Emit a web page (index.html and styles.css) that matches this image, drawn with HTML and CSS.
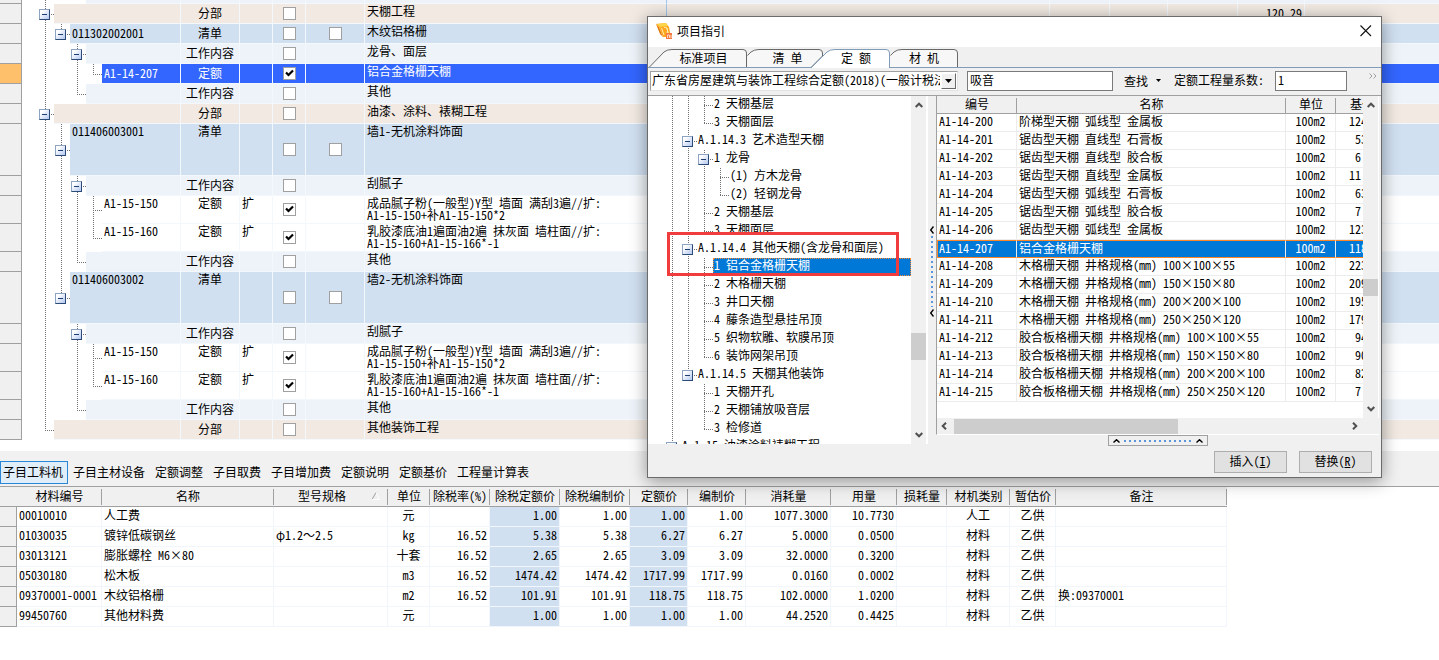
FILE: index.html
```html
<!DOCTYPE html>
<html lang="zh-CN">
<head>
<meta charset="utf-8">
<title>项目指引</title>
<link rel="stylesheet" href="styles.css">
</head>
<body>
<main class="app">
<table class="budget">
<colgroup><col class="w-head"><col class="w-tree"><col class="w-type"><col class="w-flag"><col class="w-flag"><col class="w-check"><col class="w-name"><col class="w-wide"><col class="w-a"><col class="w-b"><col class="w-c"><col class="w-d"><col></colgroup>
<tbody>
<tr class="work stub"><th></th><td><div class="branch"><i class="g v"></i><i class="g"></i><i class="g"></i><span class="code"></span></div></td><td></td><td></td><td></td><td></td><td class="name"></td><td></td><td></td><td></td><td></td><td></td><td></td></tr>
<tr class="part"><th></th><td><div class="branch"><i class="g v t"><button class="tog" aria-label="折叠"></button></i><span class="code"></span></div></td><td class="type">分部</td><td></td><td class="check"><input type="checkbox" aria-label="分部"></td><td></td><td class="name">天棚工程</td><td></td><td></td><td></td><td></td><td class="num">120.29</td><td></td></tr>
<tr class="list"><th></th><td><div class="branch"><i class="g v"></i><i class="g e"><button class="tog" aria-label="折叠"></button></i><span class="code">011302002001</span></div></td><td class="type">清单</td><td></td><td class="check"><input type="checkbox" aria-label="清单"></td><td class="check"><input type="checkbox" aria-label="清单选项"></td><td class="name">木纹铝格栅</td><td></td><td></td><td></td><td></td><td></td><td></td></tr>
<tr class="work"><th></th><td><div class="branch"><i class="g v"></i><i class="g"></i><i class="g v t"><button class="tog" aria-label="折叠"></button></i><span class="code"></span></div></td><td class="type">工作内容</td><td></td><td class="check"><input type="checkbox" aria-label="工作内容"></td><td></td><td class="name">龙骨、面层</td><td></td><td></td><td></td><td></td><td></td><td></td></tr>
<tr class="current"><th></th><td><div class="branch"><i class="g v"></i><i class="g"></i><i class="g v"></i><i class="g e"></i><span class="code">A1-14-207</span></div></td><td class="type">定额</td><td></td><td class="check"><input type="checkbox" checked aria-label="定额"></td><td></td><td class="name">铝合金格栅天棚</td><td></td><td></td><td></td><td></td><td></td><td></td></tr>
<tr class="work"><th></th><td><div class="branch"><i class="g v"></i><i class="g"></i><i class="g e"></i><span class="code"></span></div></td><td class="type">工作内容</td><td></td><td class="check"><input type="checkbox" aria-label="工作内容"></td><td></td><td class="name">其他</td><td></td><td></td><td></td><td></td><td></td><td></td></tr>
<tr class="part"><th></th><td><div class="branch"><i class="g v t"><button class="tog" aria-label="折叠"></button></i><span class="code"></span></div></td><td class="type">分部</td><td></td><td class="check"><input type="checkbox" aria-label="分部"></td><td></td><td class="name">油漆、涂料、裱糊工程</td><td></td><td></td><td></td><td></td><td></td><td></td></tr>
<tr class="list tall"><th></th><td><div class="branch"><i class="g v"></i><i class="g v t"><button class="tog" aria-label="折叠"></button></i><span class="code">011406003001</span></div></td><td class="type">清单</td><td></td><td class="check"><input type="checkbox" aria-label="清单"></td><td class="check"><input type="checkbox" aria-label="清单选项"></td><td class="name">墙1-无机涂料饰面</td><td></td><td></td><td></td><td></td><td></td><td></td></tr>
<tr class="work"><th></th><td><div class="branch"><i class="g v"></i><i class="g v"></i><i class="g v t"><button class="tog" aria-label="折叠"></button></i><span class="code"></span></div></td><td class="type">工作内容</td><td></td><td class="check"><input type="checkbox" aria-label="工作内容"></td><td></td><td class="name">刮腻子</td><td></td><td></td><td></td><td></td><td></td><td></td></tr>
<tr class="double"><th></th><td><div class="branch"><i class="g v"></i><i class="g v"></i><i class="g v"></i><i class="g v t"></i><span class="code">A1-15-150</span></div></td><td class="type">定额</td><td class="flag">扩</td><td class="check"><input type="checkbox" checked aria-label="定额"></td><td></td><td class="name">成品腻子粉(一般型)Y型 墙面 满刮3遍//扩:<br>A1-15-150+补A1-15-150*2</td><td></td><td></td><td></td><td></td><td></td><td></td></tr>
<tr class="double"><th></th><td><div class="branch"><i class="g v"></i><i class="g v"></i><i class="g v"></i><i class="g e"></i><span class="code">A1-15-160</span></div></td><td class="type">定额</td><td class="flag">扩</td><td class="check"><input type="checkbox" checked aria-label="定额"></td><td></td><td class="name">乳胶漆底油1遍面油2遍 抹灰面 墙柱面//扩:<br>A1-15-160+A1-15-166*-1</td><td></td><td></td><td></td><td></td><td></td><td></td></tr>
<tr class="work"><th></th><td><div class="branch"><i class="g v"></i><i class="g v"></i><i class="g e"></i><span class="code"></span></div></td><td class="type">工作内容</td><td></td><td class="check"><input type="checkbox" aria-label="工作内容"></td><td></td><td class="name">其他</td><td></td><td></td><td></td><td></td><td></td><td></td></tr>
<tr class="list tall"><th></th><td><div class="branch"><i class="g v"></i><i class="g e"><button class="tog" aria-label="折叠"></button></i><span class="code">011406003002</span></div></td><td class="type">清单</td><td></td><td class="check"><input type="checkbox" aria-label="清单"></td><td class="check"><input type="checkbox" aria-label="清单选项"></td><td class="name">墙2-无机涂料饰面</td><td></td><td></td><td></td><td></td><td></td><td></td></tr>
<tr class="work"><th></th><td><div class="branch"><i class="g v"></i><i class="g"></i><i class="g v t"><button class="tog" aria-label="折叠"></button></i><span class="code"></span></div></td><td class="type">工作内容</td><td></td><td class="check"><input type="checkbox" aria-label="工作内容"></td><td></td><td class="name">刮腻子</td><td></td><td></td><td></td><td></td><td></td><td></td></tr>
<tr class="double"><th></th><td><div class="branch"><i class="g v"></i><i class="g"></i><i class="g v"></i><i class="g v t"></i><span class="code">A1-15-150</span></div></td><td class="type">定额</td><td class="flag">扩</td><td class="check"><input type="checkbox" checked aria-label="定额"></td><td></td><td class="name">成品腻子粉(一般型)Y型 墙面 满刮3遍//扩:<br>A1-15-150+补A1-15-150*2</td><td></td><td></td><td></td><td></td><td></td><td></td></tr>
<tr class="double"><th></th><td><div class="branch"><i class="g v"></i><i class="g"></i><i class="g v"></i><i class="g e"></i><span class="code">A1-15-160</span></div></td><td class="type">定额</td><td class="flag">扩</td><td class="check"><input type="checkbox" checked aria-label="定额"></td><td></td><td class="name">乳胶漆底油1遍面油2遍 抹灰面 墙柱面//扩:<br>A1-15-160+A1-15-166*-1</td><td></td><td></td><td></td><td></td><td></td><td></td></tr>
<tr class="work"><th></th><td><div class="branch"><i class="g v"></i><i class="g"></i><i class="g e"></i><span class="code"></span></div></td><td class="type">工作内容</td><td></td><td class="check"><input type="checkbox" aria-label="工作内容"></td><td></td><td class="name">其他</td><td></td><td></td><td></td><td></td><td></td><td></td></tr>
<tr class="part"><th></th><td><div class="branch"><i class="g e"></i><span class="code"></span></div></td><td class="type">分部</td><td></td><td class="check"><input type="checkbox" aria-label="分部"></td><td></td><td class="name">其他装饰工程</td><td></td><td></td><td></td><td></td><td></td><td></td></tr>
</tbody>
</table>

<nav class="views">
<button class="view on">子目工料机</button><button class="view">子目主材设备</button><button class="view">定额调整</button><button class="view">子目取费</button><button class="view">子目增加费</button><button class="view">定额说明</button><button class="view">定额基价</button><button class="view">工程量计算表</button>
</nav>

<div class="detail">
<table class="materials">
<colgroup><col class="m-head"><col class="m-code"><col class="m-name"><col class="m-spec"><col class="m-unit"><col class="m-rate"><col class="m-price"><col class="m-price"><col class="m-cost"><col class="m-cost"><col class="m-code"><col class="m-use"><col class="m-loss"><col class="m-kind"><col class="m-est"><col class="m-note"></colgroup>
<thead><tr><th></th><th>材料编号</th><th>名称</th><th><span class="sorted">型号规格<svg width="8" height="8" viewBox="0 0 8 8"><path d="M0 7.500L4 .5" stroke="#a0a0a0" fill="none"/><path d="M4 .5L7.500 7.500H0" stroke="#fff" fill="none"/></svg></span></th><th>单位</th><th>除税率(%)</th><th>除税定额价</th><th>除税编制价</th><th>定额价</th><th>编制价</th><th>消耗量</th><th>用量</th><th>损耗量</th><th>材机类别</th><th>暂估价</th><th>备注</th></tr></thead>
<tbody>
<tr><th></th><td>00010010</td><td>人工费</td><td></td><td>元</td><td></td><td>1.00</td><td>1.00</td><td>1.00</td><td>1.00</td><td>1077.3000</td><td>10.7730</td><td></td><td>人工</td><td>乙供</td><td></td></tr>
<tr><th></th><td>01030035</td><td>镀锌低碳钢丝</td><td>φ1.2～2.5</td><td>kg</td><td>16.52</td><td>5.38</td><td>5.38</td><td>6.27</td><td>6.27</td><td>5.0000</td><td>0.0500</td><td></td><td>材料</td><td>乙供</td><td></td></tr>
<tr><th></th><td>03013121</td><td>膨胀螺栓 M6×80</td><td></td><td>十套</td><td>16.52</td><td>2.65</td><td>2.65</td><td>3.09</td><td>3.09</td><td>32.0000</td><td>0.3200</td><td></td><td>材料</td><td>乙供</td><td></td></tr>
<tr><th></th><td>05030180</td><td>松木板</td><td></td><td>m3</td><td>16.52</td><td>1474.42</td><td>1474.42</td><td>1717.99</td><td>1717.99</td><td>0.0160</td><td>0.0002</td><td></td><td>材料</td><td>乙供</td><td></td></tr>
<tr><th></th><td>09370001-0001</td><td>木纹铝格栅</td><td></td><td>m2</td><td>16.52</td><td>101.91</td><td>101.91</td><td>118.75</td><td>118.75</td><td>102.0000</td><td>1.0200</td><td></td><td>材料</td><td>乙供</td><td>换:09370001</td></tr>
<tr><th></th><td>99450760</td><td>其他材料费</td><td></td><td>元</td><td></td><td>1.00</td><td>1.00</td><td>1.00</td><td>1.00</td><td>44.2520</td><td>0.4425</td><td></td><td>材料</td><td>乙供</td><td></td></tr>
</tbody>
</table>
</div>
</main>

<section class="dialog" role="dialog" aria-labelledby="dlg-title">
<header class="titlebar">
<svg class="logo" width="18" height="18" viewBox="0 0 18 18"><path d="M0 2L3 5L7 15L4 12Z" fill="#e07a10"/><path d="M0 2L10 1L13 5L15 15L7 15L3 5Z" fill="#ffa51e"/><path d="M1 2L10 1L12 4L4 5Z" fill="#ffd54a"/><path d="M5.500 6l2.500 7M8 5.500q3-1 3.500 2.500t-1.500 3.500M10.500 5.500l2 6" stroke="#fff0b0" fill="none"/><path d="M10 11H16V17H10Z" fill="#f5783c"/><path d="M11.500 16v-3h2v3M15 13v3" stroke="#ffd8c0" fill="none"/></svg>
<h1 id="dlg-title">项目指引</h1>
<button class="close" aria-label="关闭"><svg width="12" height="12" viewBox="0 0 12 12"><path d="M.5 .5L11 11M11 .5L.5 11" stroke="#111" stroke-width="1.100"/></svg></button>
</header>
<nav class="tabs">
<svg class="tab-shapes" width="320" height="21" viewBox="0 0 320 21" fill="none"><path d="M1 20.500L16 5Q19 2.500 24 2.500H95Q98.500 2.500 98.500 6V20.500" fill="#f7f7f7" stroke="#696969"/><path d="M99.500 8.500L103 5Q106 2.500 111 2.500H171Q174.500 2.500 174.500 6V9L163 20.500H99.500" fill="#f7f7f7" stroke="#696969"/><path d="M242.500 8.500L246 5Q249 2.500 254 2.500H306Q309.500 2.500 309.500 6V20.500H242" fill="#f7f7f7" stroke="#696969"/><path d="M0 20.500H320" stroke="#7f9db9"/><path d="M163 21L179 5Q182 2.500 187 2.500H238Q241.500 2.500 241.500 6V21" fill="#fff" stroke="#7f9db9"/></svg>
<button class="tab tab-a">标准项目</button><button class="tab tab-b">清 单</button><button class="tab tab-c">定 额</button><button class="tab tab-d">材 机</button>
</nav>
<div class="toolbar">
<div class="combo"><select aria-label="定额库"><option>广东省房屋建筑与装饰工程综合定额(2018)(一般计税法)</option></select><span class="drop"><svg width="7" height="4" viewBox="0 0 7 4"><path d="M0 0H7L3.500 4Z"/></svg></span></div>
<input class="box search" type="text" value="吸音" aria-label="查找内容">
<button class="find">查找<svg width="5" height="3" viewBox="0 0 5 3"><path d="M0 0H5L2.500 3Z"/></svg></button>
<label for="factor">定额工程量系数:</label>
<input class="box factor" id="factor" type="text" value="1">
<svg class="more" width="8" height="6" viewBox="0 0 8 6"><path d="M.5 .5L3 3L.5 5.500M4.500 .5L7 3L4.500 5.500" stroke="#a0a0a0" fill="none"/></svg>
</div>
<div class="panes">
<div class="outline">
<ul class="tree">
<li><i class="g v"></i><i class="g v"></i><i class="g v t"></i><span>2 天棚基层</span></li>
<li><i class="g v"></i><i class="g v"></i><i class="g e"></i><span>3 天棚面层</span></li>
<li><i class="g v"></i><i class="g v t"><button class="tog" aria-label="折叠"></button></i><span>A.1.14.3 艺术造型天棚</span></li>
<li><i class="g v"></i><i class="g v"></i><i class="g v t"><button class="tog" aria-label="折叠"></button></i><span>1 龙骨</span></li>
<li><i class="g v"></i><i class="g v"></i><i class="g v"></i><i class="g v t"></i><span>(1) 方木龙骨</span></li>
<li><i class="g v"></i><i class="g v"></i><i class="g v"></i><i class="g e"></i><span>(2) 轻钢龙骨</span></li>
<li><i class="g v"></i><i class="g v"></i><i class="g v t"></i><span>2 天棚基层</span></li>
<li><i class="g v"></i><i class="g v"></i><i class="g e"></i><span>3 天棚面层</span></li>
<li><i class="g v"></i><i class="g v t"><button class="tog" aria-label="折叠"></button></i><span>A.1.14.4 其他天棚(含龙骨和面层)</span></li>
<li><i class="g v"></i><i class="g v"></i><i class="g v t"></i><span class="picked">1 铝合金格栅天棚</span></li>
<li><i class="g v"></i><i class="g v"></i><i class="g v t"></i><span>2 木格栅天棚</span></li>
<li><i class="g v"></i><i class="g v"></i><i class="g v t"></i><span>3 井口天棚</span></li>
<li><i class="g v"></i><i class="g v"></i><i class="g v t"></i><span>4 藤条造型悬挂吊顶</span></li>
<li><i class="g v"></i><i class="g v"></i><i class="g v t"></i><span>5 织物软雕、软膜吊顶</span></li>
<li><i class="g v"></i><i class="g v"></i><i class="g e"></i><span>6 装饰网架吊顶</span></li>
<li><i class="g v"></i><i class="g e"><button class="tog" aria-label="折叠"></button></i><span>A.1.14.5 天棚其他装饰</span></li>
<li><i class="g v"></i><i class="g"></i><i class="g v t"></i><span>1 天棚开孔</span></li>
<li><i class="g v"></i><i class="g"></i><i class="g v t"></i><span>2 天棚铺放吸音层</span></li>
<li><i class="g v"></i><i class="g"></i><i class="g e"></i><span>3 检修道</span></li>
<li><i class="g v t"><button class="tog" aria-label="折叠"></button></i><span>A.1.15 油漆涂料裱糊工程</span></li>
</ul>
<div class="vbar"><svg width="8" height="6" viewBox="0 0 8 6"><path d="M.7 5L4 1.700L7.300 5" class="arrow"/></svg><i class="room-a"></i><i class="thumb-a"></i><i class="room-b"></i><svg width="8" height="6" viewBox="0 0 8 6"><path d="M.7 1L4 4.300L7.300 1" class="arrow"/></svg></div>
<div class="mark"></div>
</div>
<div class="splitter"><svg width="4" height="8" viewBox="0 0 4 8"><path d="M3.500 .5L.7 4L3.500 7.500" stroke="#000" stroke-width="1.400" fill="none"/></svg><i class="dots-v"></i><svg width="4" height="8" viewBox="0 0 4 8"><path d="M3.500 .5L.7 4L3.500 7.500" stroke="#000" stroke-width="1.400" fill="none"/></svg></div>
<div class="right">
<div class="sheet">
<div class="rows">
<table class="quota">
<colgroup><col class="q-code"><col class="q-name"><col class="q-unit"><col class="q-base"></colgroup>
<thead><tr><th>编号</th><th>名称</th><th>单位</th><th>基价</th></tr></thead>
<tbody>
<tr><td>A1-14-200</td><td>阶梯型天棚 弧线型 金属板</td><td>100m2</td><td>12419</td></tr>
<tr><td>A1-14-201</td><td>锯齿型天棚 直线型 石膏板</td><td>100m2</td><td>&nbsp;5362</td></tr>
<tr><td>A1-14-202</td><td>锯齿型天棚 直线型 胶合板</td><td>100m2</td><td>&nbsp;6 </td></tr>
<tr><td>A1-14-203</td><td>锯齿型天棚 直线型 金属板</td><td>100m2</td><td>11 </td></tr>
<tr><td>A1-14-204</td><td>锯齿型天棚 弧线型 石膏板</td><td>100m2</td><td>&nbsp;6362</td></tr>
<tr><td>A1-14-205</td><td>锯齿型天棚 弧线型 胶合板</td><td>100m2</td><td>&nbsp;7 </td></tr>
<tr><td>A1-14-206</td><td>锯齿型天棚 弧线型 金属板</td><td>100m2</td><td>12362</td></tr>
<tr class="hit"><td>A1-14-207</td><td>铝合金格栅天棚</td><td>100m2</td><td>11875</td></tr>
<tr><td>A1-14-208</td><td>木格栅天棚 井格规格(mm) 100×100×55</td><td>100m2</td><td>22362</td></tr>
<tr><td>A1-14-209</td><td>木格栅天棚 井格规格(mm) 150×150×80</td><td>100m2</td><td>20962</td></tr>
<tr><td>A1-14-210</td><td>木格栅天棚 井格规格(mm) 200×200×100</td><td>100m2</td><td>19562</td></tr>
<tr><td>A1-14-211</td><td>木格栅天棚 井格规格(mm) 250×250×120</td><td>100m2</td><td>17962</td></tr>
<tr><td>A1-14-212</td><td>胶合板格栅天棚 井格规格(mm) 100×100×55</td><td>100m2</td><td>&nbsp;9462</td></tr>
<tr><td>A1-14-213</td><td>胶合板格栅天棚 井格规格(mm) 150×150×80</td><td>100m2</td><td>&nbsp;9062</td></tr>
<tr><td>A1-14-214</td><td>胶合板格栅天棚 井格规格(mm) 200×200×100</td><td>100m2</td><td>&nbsp;8262</td></tr>
<tr><td>A1-14-215</td><td>胶合板格栅天棚 井格规格(mm) 250×250×120</td><td>100m2</td><td>&nbsp;7 </td></tr>
</tbody>
</table>
</div>
<div class="vbar"><svg width="8" height="6" viewBox="0 0 8 6"><path d="M.7 5L4 1.700L7.300 5" class="arrow"/></svg><i class="room-c"></i><i class="thumb-b"></i><i class="room-d"></i><svg width="8" height="6" viewBox="0 0 8 6"><path d="M.7 1L4 4.300L7.300 1" class="arrow"/></svg></div>
<div class="hbar"><svg width="6" height="8" viewBox="0 0 6 8"><path d="M5 .7L1.700 4L5 7.300" class="arrow"/></svg><i class="thumb-h"></i><svg width="6" height="8" viewBox="0 0 6 8"><path d="M1 .7L4.300 4L1 7.300" class="arrow"/></svg></div>
</div>
<div class="fold"><svg width="7" height="4" viewBox="0 0 7 4"><path d="M.5 3.500L3.500 .7L6.500 3.500" stroke="#000" stroke-width="1.400" fill="none"/></svg><i class="dots-h"></i><svg width="7" height="4" viewBox="0 0 7 4"><path d="M.5 3.500L3.500 .7L6.500 3.500" stroke="#000" stroke-width="1.400" fill="none"/></svg></div>
<div class="actions"><button class="action">插入(<u>I</u>)</button><button class="action">替换(<u>R</u>)</button></div>
</div>
</div>
</section>
</body>
</html>
```

FILE: styles.css
```css
* { box-sizing: border-box; }
body {
  margin: 0;
  position: relative;
  min-height: 100vh;
  overflow: hidden;
  background: #fff;
  color: #000;
  font: 12px/14px "Noto Sans Mono CJK SC", "Liberation Mono", "Noto Sans CJK SC", monospace;
  font-variant-ligatures: none;
  font-feature-settings: "ccmp" 0, "liga" 0, "dlig" 0;
}
button, input, select { font: inherit; color: inherit; margin: 0; padding: 0; border-radius: 0; }
button { background: none; border: 0; }
svg { display: block; flex: none; }
table { border-collapse: separate; border-spacing: 0; table-layout: fixed; }
th { font-weight: 400; padding: 0; }
td { padding: 0; white-space: nowrap; }

/* tree guides */
.g { flex: none; width: 16px; display: flex; align-items: center; padding-left: 1px; background-repeat: no-repeat; }
.v { background-image: repeating-linear-gradient(#707070 0 1px, transparent 1px 2px); background-position: 7px 0; background-size: 1px 100%; }
.e, .v.t {
  background-image: repeating-linear-gradient(#707070 0 1px, transparent 1px 2px), repeating-linear-gradient(90deg, #707070 0 1px, transparent 1px 2px);
  background-position: 7px 0, 7px 50%;
  background-size: 1px 50%, 9px 1px;
}
.v.t { background-size: 1px 100%, 9px 1px; }
.tog {
  width: 11px;
  height: 11px;
  border: 1px solid #8fa3c2;
  border-right-color: #2c4a78;
  border-bottom-color: #2c4a78;
  background: linear-gradient(#1f3f70, #1f3f70) center / 5px 1px no-repeat, linear-gradient(135deg, #fff 20%, #b4c8f0);
}

/* budget grid */
.budget { width: 100%; }
.w-head { width: 22px; }
.w-tree { width: 159px; }
.w-type { width: 59px; }
.w-flag { width: 33px; }
.w-check { width: 59px; }
.w-name { width: 302px; }
.w-wide { width: 383px; }
.w-a { width: 60px; }
.w-b { width: 58px; }
.w-c { width: 70px; }
.w-d { width: 67px; }
.budget tr { height: 20px; }
.budget .tall { height: 52px; }
.budget .double { height: 28px; }
.budget .stub { height: 4px; }
.budget th { background: #f0f0f0; border-right: 1px solid #a0a0a0; border-bottom: 1px solid #a0a0a0; }
.budget .current th { background: #ffc06c; }
.budget td { border-right: 1px solid #f3f8fd; border-bottom: 1px solid #f3f8fd; vertical-align: top; }
.budget td:nth-child(2) { border-bottom: 0; }
.budget td:last-child { border-right: 0; }
.budget td.name { border-right-color: #a0c4ea; padding: 1px 0 0 2px; line-height: 12px; }
.part td, .part .code { background: #f1e9e2; }
.list td, .list .code { background: #d1e0f1; }
.work td, .work .code { background: #edf3f8; }
.current td, .current .code { background: #3366ff; color: #fff; }
.budget td:nth-child(2) { background: #fff; }
.branch { display: flex; height: 20px; padding-left: 16px; }
.tall .branch { height: 52px; }
.double .branch { height: 28px; }
.stub .branch { height: 4px; }
.code { flex: 1; padding-left: 2px; line-height: 18px; border-bottom: 1px solid #f3f8fd; }
.type { text-align: center; line-height: 18px; }
.flag { padding-left: 2px; }
.num { text-align: right; padding-right: 2px; line-height: 18px; }
.tall .code, .double .code, .tall .type, .double .type { line-height: 14px; }
.budget td.check { text-align: center; vertical-align: middle; }
.check input {
  appearance: none;
  display: block;
  width: 13px;
  height: 13px;
  margin: 0 auto;
  border: 1px solid #a0a0a0;
  background: #fff;
}
.check input:checked { background: #fff url("data:image/svg+xml,%3Csvg xmlns='http://www.w3.org/2000/svg' viewBox='0 0 11 11'%3E%3Cpath d='M2 4.500L4.500 7L9 2.500' stroke='%23000' stroke-width='2.200' fill='none'/%3E%3C/svg%3E"); }

/* lower views */
.views { display: flex; margin-top: 11px; padding: 10px 0 2px; height: 35px; background: #f1f1f1; }
.view { padding: 0 4px 2px; border: 1px solid transparent; white-space: nowrap; height: 23px; font-family: "Noto Sans CJK SC", sans-serif; }
.view.on { background: #e0eef9; border-color: #2a86d6; padding-left: 2px; }
.detail { border-top: 1px solid #a0a0a0; }
.materials { width: 1227px; }
.m-head { width: 17px; }
.m-code { width: 85px; }
.m-name { width: 172px; }
.m-spec { width: 114px; }
.m-unit { width: 42px; }
.m-rate { width: 60px; }
.m-price { width: 70px; }
.m-cost { width: 58px; }
.m-use { width: 66px; }
.m-loss { width: 50px; }
.m-kind { width: 63px; }
.m-est { width: 46px; }
.m-note { width: 171px; }
.materials tr { height: 20px; }
.materials th { background: #f0f0f0; border-bottom: 1px solid #a0a0a0; white-space: nowrap; padding-bottom: 2px; }
.materials tbody th { border-right: 1px solid #a0a0a0; }
.materials thead th, .quota th { background: linear-gradient(#a0a0a0, #a0a0a0) right 2px / 1px 16px no-repeat, #f0f0f0; }
.materials thead th:first-child { background: #f0f0f0; }
.sorted { display: flex; align-items: center; justify-content: flex-end; gap: 26px; padding-right: 8px; }
.materials td { border-right: 1px solid #f0f6fc; border-bottom: 1px solid #f0f6fc; padding: 0 2px 3px; line-height: 16px; text-align: right; }
.materials td:nth-child(-n+4), .materials td:last-child { text-align: left; }
.materials td:nth-child(5), .materials td:nth-child(14), .materials td:nth-child(15) { text-align: center; }
.materials td:nth-child(7), .materials td:nth-child(9) { background: #d1e0f1; }

/* floating window */
.dialog {
  position: absolute;
  left: 647px;
  top: 16px;
  width: 735px;
  border: 1px solid #6b6b6b;
  background: #f0f0f0;
  box-shadow: 0 3px 16px rgba(0, 0, 0, .4);
}
.titlebar { display: flex; align-items: center; height: 30px; padding: 0 9px 2px 8px; background: #fff; }
.titlebar h1 { margin: 0 auto 0 3px; font: 12px/14px "Noto Sans CJK SC", sans-serif; }
.close { height: 12px; }
.tabs { position: relative; display: flex; height: 21px; border-bottom: 1px solid #7f9db9; }
.tab-shapes { position: absolute; left: 0; top: 0; }
.tab { position: relative; padding-top: 2px; white-space: pre; }
.tab-a { width: 99px; padding-left: 12px; }
.tab-b { width: 75px; padding-left: 6px; }
.tab-c { width: 68px; }
.tab-d { width: 68px; }
.toolbar { display: flex; align-items: center; height: 28px; padding: 0 4px 2px 2px; border-bottom: 1px solid #a0a0a0; }
.combo { display: flex; width: 308px; height: 20px; margin-right: 9px; border: 1px solid #a0a0a0; border-right-color: #e3e3e3; border-bottom-color: #e3e3e3; background: #fff; }
.combo select { flex: 1; min-width: 0; appearance: none; border: 0; background: none; padding: 0 0 2px 1px; overflow: hidden; text-overflow: clip; }
.drop { display: flex; align-items: center; justify-content: center; width: 15px; margin: 1px; border: 1px solid #fff; border-right-color: #696969; border-bottom-color: #696969; background: #f0f0f0; }
.box { height: 20px; border: 1px solid #7a7a7a; background: #fff; padding: 0 2px 2px; }
.search { width: 146px; }
.find { display: flex; align-items: center; gap: 8px; margin: 0 13px 0 11px; font-family: "Noto Sans CJK SC", sans-serif; }
.toolbar label { width: 101px; padding-bottom: 2px; white-space: nowrap; }
.factor { width: 72px; }
.more { margin: 0 0 10px auto; }
.panes { display: flex; height: 381px; }
.outline { position: relative; display: flex; width: 280px; height: 348px; background: #fff; border-right: 2px solid #fff; }
.tree { flex: 1; margin: 0; padding: 0 0 0 17px; list-style: none; overflow: hidden; }
.tree li { display: flex; height: 18px; white-space: nowrap; }
.tree span { padding: 0 1px; line-height: 14px; }
.tree .picked { flex: 1; background: #0078d7; color: #fff; outline: 1px dotted #ff8728; outline-offset: -1px; }
.vbar { display: flex; flex-direction: column; align-items: center; flex: none; width: 15px; padding: 6px 0; background: #f0f0f0; }
.arrow { stroke: #505050; stroke-width: 2; fill: none; }
.room-a { flex: 221; }
.room-b { flex: 71; }
.room-c { flex: 167; }
.room-d { flex: 107; }
.thumb-a, .thumb-b { width: 15px; height: 27px; background: #cdcdcd; }
.thumb-b { height: 17px; }
.mark { position: absolute; left: 19px; top: 136px; width: 232px; height: 44px; border: 3px solid #f03c3c; }
.splitter { display: flex; flex-direction: column; align-items: center; width: 8px; padding-top: 130px; gap: 2px; }
.dots-v { width: 2px; height: 71px; background: repeating-linear-gradient(#5b96dc 0 2px, transparent 2px 5px); }
.right { flex: 1; min-width: 0; padding-right: 2px; }
.sheet { display: grid; grid-template-columns: 1fr 16px; border-left: 1px solid #a0a0a0; border-bottom: 1px solid #fff; background: #fff; }
.rows { height: 322px; overflow: hidden; }
.quota { width: 427px; }
.q-code { width: 80px; }
.q-name { width: 269px; }
.q-unit { width: 50px; }
.q-base { width: 52px; }
.quota tr { height: 18px; }
.quota th { border-bottom: 1px solid #a0a0a0; padding-bottom: 1px; }
.quota td { border-right: 1px solid #ececec; border-bottom: 1px solid #ececec; padding: 0 2px 3px; line-height: 14px; }
.quota td:nth-child(3) { text-align: center; }
.quota td:nth-child(4) { padding-left: 13px; white-space: pre; }
.quota .hit td { background: #0078d7; color: #fff; border-top: 1px solid #ff8728; border-bottom-color: #ff8728; padding-bottom: 2px; }
.quota .hit td:first-child { border-left: 1px solid #ff8728; padding-left: 1px; }
.hbar { grid-column: 1 / 3; display: flex; align-items: center; height: 16px; padding: 0 21px 0 4px; background: #f0f0f0; }
.thumb-h { width: 224px; height: 15px; margin: 0 auto 0 7px; background: #cdcdcd; }
.fold { display: flex; align-items: center; justify-content: center; gap: 4px; width: 100px; height: 11px; margin-left: 172px; border: 1px solid #a0a0a0; }
.dots-h { width: 68px; height: 2px; background: repeating-linear-gradient(90deg, #5b96dc 0 2px, transparent 2px 5px); }
.actions { display: flex; justify-content: flex-end; gap: 12px; padding: 5px 7px 0 0; }
.action { width: 73px; height: 22px; padding-bottom: 2px; border: 1px solid #adadad; background: #e1e1e1; }
```
